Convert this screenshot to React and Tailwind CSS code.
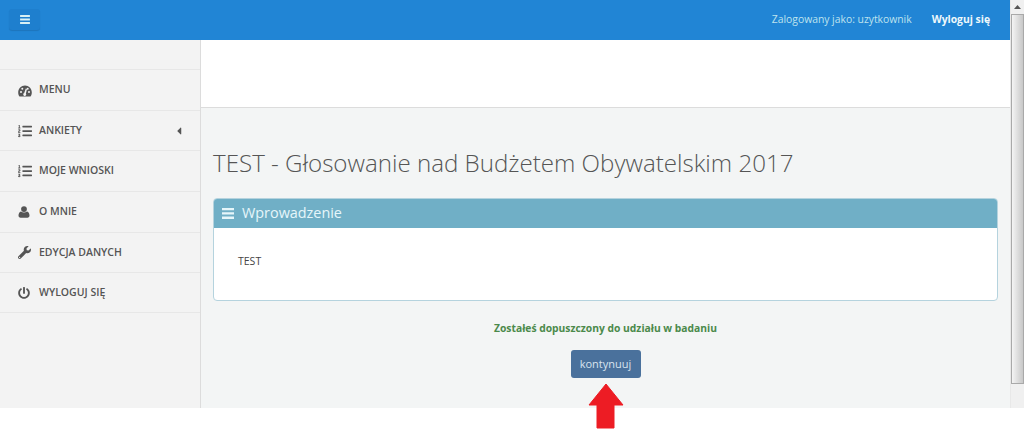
import React from "react";
import { FaCaretLeft, FaListOl, FaPowerOff, FaWrench } from "react-icons/fa";

const Gauge = () => (
  <svg width="14" height="12" viewBox="0 0 14 12" className="mt-[1px]">
    <path fillRule="evenodd" fill="currentColor" d="M7 .5C3.2.5.2 3.6.2 7.4c0 1.6.5 2.9 1.3 4.1h11c.8-1.2 1.3-2.5 1.3-4.1C13.800 3.600 10.800.5 7 .5ZM3 6a1 1 0 1 0 0 2 1 1 0 0 0 0-2Zm8 0a1 1 0 1 0 0 2 1 1 0 0 0 0-2ZM4.300 2.700a1 1 0 1 0 0 2 1 1 0 0 0 0-2Zm5.400 0a1 1 0 1 0 0 2 1 1 0 0 0 0-2ZM7.800 3.500 6.200 8a1.500 1.500 0 1 0 1.700.5L9 3.900Z" />
  </svg>
);
const Bust = () => (
  <svg width="12" height="12" viewBox="0 0 12 12">
    <circle cx="6" cy="3.100" r="2.900" fill="currentColor" />
    <path fill="currentColor" d="M3 5.400C1.300 5.800.500 7.500.500 9.500c0 1.400.8 2.200 2 2.200h7c1.200 0 2-.8 2-2.200 0-2-.8-3.700-2.500-4.100-1.800 1.300-4.200 1.300-6 0Z" />
  </svg>
);
const Bars = ({ w, h }) => (
  <svg width={w} height={h} viewBox="0 0 12 11">
    <path fill="currentColor" d="M0 0h12v2.300H0zM0 4.300h12v2.300H0zM0 8.600h12v2.300H0z" />
  </svg>
);

const items = [
  { icon: Gauge, label: "MENU", h: "h-[41px]" },
  { icon: FaListOl, label: "ANKIETY", h: "h-[40px]", caret: true, cls: "text-[14px]" },
  { icon: FaListOl, label: "MOJE WNIOSKI", h: "h-[41px]", cls: "text-[14px]" },
  { icon: Bust, label: "O MNIE", h: "h-[41px]" },
  { icon: FaWrench, label: "EDYCJA DANYCH", h: "h-[40px]", cls: "text-[13px]" },
  { icon: FaPowerOff, label: "WYLOGUJ SIĘ", h: "h-[40px]", cls: "text-[12px]" },
];

export default function App() {
  return (
    <div className="relative w-[1024px] h-[434px] overflow-hidden bg-white flex flex-col font-['Open_Sans',sans-serif]">
      <div className="flex h-[408px]">
        <div className="flex-1 min-w-0 flex flex-col">
          <header className="h-[40px] shrink-0 bg-[#2185d5] flex items-center justify-between pl-[9px] pr-[20px]">
            <button className="w-[31px] h-[21px] -mt-[1px] rounded-[3px] bg-[#1e7fce] shadow-[0_1px_1px_rgba(0,0,0,0.12)] flex items-center justify-center text-[#d8f0f5]">
              <Bars w={10} h={9} />
            </button>
            <div className="flex items-center -mt-[1px]">
              <span className="text-[10.35px] text-[#bfe3ee]">Zalogowany jako: uzytkownik</span>
              <span className="ml-[20px] text-[10.35px] font-bold text-[#eef8fb]">Wyloguj się</span>
            </div>
          </header>
          <div className="flex-1 flex min-h-0">
            <aside className="w-[201px] shrink-0 bg-[#f3f3f3] border-r border-[#dcdcdc] pt-[29px]">
              <div className="border-t border-[#e7e7e7]">
                {items.map(({ icon: Icon, label, h, caret, cls }) => (
                  <div key={label} className={`${h} box-border border-b border-[#e7e7e7] flex items-center pl-[18px] pr-[15px] text-[#555555]`}>
                    <span className="w-[21px] shrink-0 flex">
                      <Icon className={cls} />
                    </span>
                    <span className="text-[10.5px] font-semibold">{label}</span>
                    {caret && <FaCaretLeft className="ml-auto text-[12px]" />}
                  </div>
                ))}
              </div>
            </aside>
            <main className="flex-1 min-w-0 bg-[#f3f5f5] flex flex-col">
              <div className="h-[68px] shrink-0 bg-white border-b border-[#dcdcdc]" />
              <div className="px-[12px]">
                <h1 className="mt-[38px] h-[34px] leading-[34px] text-[24.13px] font-light text-[#555555] whitespace-nowrap">
                  TEST - Głosowanie nad Budżetem Obywatelskim 2017
                </h1>
                <section className="mt-[18px] h-[103px] box-border rounded-[4px] border border-[#b5d3de] bg-white overflow-hidden">
                  <div className="h-[30px] -mx-px -mt-px bg-[#70afc6] flex items-center pl-[9px] text-[#e6f6fa]">
                    <Bars w={12} h={11} />
                    <span className="ml-[8px] text-[14.4px]">Wprowadzenie</span>
                  </div>
                  <p className="pl-[24px] pt-[25px] text-[10.5px] leading-[16px] text-[#444444]">TEST</p>
                </section>
                <p className="mt-[19px] text-center text-[10.3px] leading-[16px] font-bold text-[#4b8a4b]">
                  Zostałeś dopuszczony do udziału w badaniu
                </p>
                <div className="mt-[14px] flex justify-center">
                  <button className="w-[70px] h-[28px] rounded-[3px] bg-[#4a719c] text-[11px] text-[#d8e4ef]">kontynuuj</button>
                </div>
              </div>
            </main>
          </div>
        </div>
        <div className="w-[14px] shrink-0 bg-[#f0f0f0] flex flex-col border-l border-[#e8e8e8]">
          <div className="h-[14px] flex items-center justify-center">
            <svg width="7" height="4" viewBox="0 0 7 4"><path d="M0 4 3.5 0 7 4z" fill="#555" /></svg>
          </div>
          <div className="h-[370px] border border-[#a9a9a9] bg-gradient-to-r from-[#f4f4f4] to-[#c8c8c8]" />
        </div>
      </div>
      <svg className="absolute left-[588px] top-[383px]" width="36" height="46" viewBox="0 0 36 46">
        <path d="M18 1 35 22 26 22 26 45 9 45 9 22 1 22Z" fill="#ed1c24" stroke="#ed1c24" strokeLinejoin="round" />
      </svg>
    </div>
  );
}
